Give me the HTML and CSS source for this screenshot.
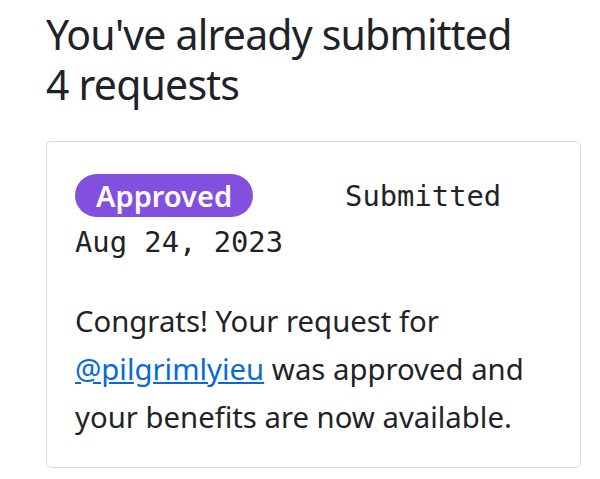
FILE: index.html
```html
<!DOCTYPE html>
<html lang="en">
<head>
<meta charset="utf-8">
<title>Requests</title>
<link rel="stylesheet" href="styles.css">
</head>
<body>
<main class="page">
  <h1 class="title">You've already submitted 4 requests</h1>
  <section class="card">
    <div class="meta">
      <span class="badge">Approved</span>
      <span class="submitted">Submitted</span>
    </div>
    <div class="date">Aug 24, 2023</div>
    <p class="message">Congrats! Your request for <a href="#" class="user">@pilgrimlyieu</a> was approved and your benefits are now available.</p>
  </section>
</main>
</body>
</html>
```
FILE: styles.css
```css
html, body {
  margin: 0;
  padding: 0;
  background: #ffffff;
}
body {
  font-family: "Noto Sans", "Open Sans", sans-serif;
  color: #1f2328;
}
.page {
  width: 535px;
  padding: 9px 0 0 46px;
}
.title {
  max-width: 480px;
  margin: 0 0 32px 0;
  font-size: 41px;
  font-weight: 400;
  line-height: 50px;
  letter-spacing: -0.8px;
}
.card {
  border: 1px solid #dcdcdc;
  border-radius: 5px;
  padding: 32px 28px 26px 28px;
}
.meta {
  display: flex;
  align-items: center;
}
.badge {
  display: inline-block;
  background: #8250df;
  color: #ffffff;
  font-weight: 600;
  font-size: 29px;
  line-height: 43px;
  padding: 0 21px;
  border-radius: 22px;
}
.submitted, .date {
  font-family: "DejaVu Sans Mono", monospace;
  font-size: 28.8px;
}
.submitted {
  margin-left: 92px;
}
.date {
  line-height: 50px;
}
.message {
  margin: 30px 0 0 0;
  font-size: 29.3px;
  line-height: 48px;
}
.user {
  color: #0969da;
  text-decoration: underline;
}
```
